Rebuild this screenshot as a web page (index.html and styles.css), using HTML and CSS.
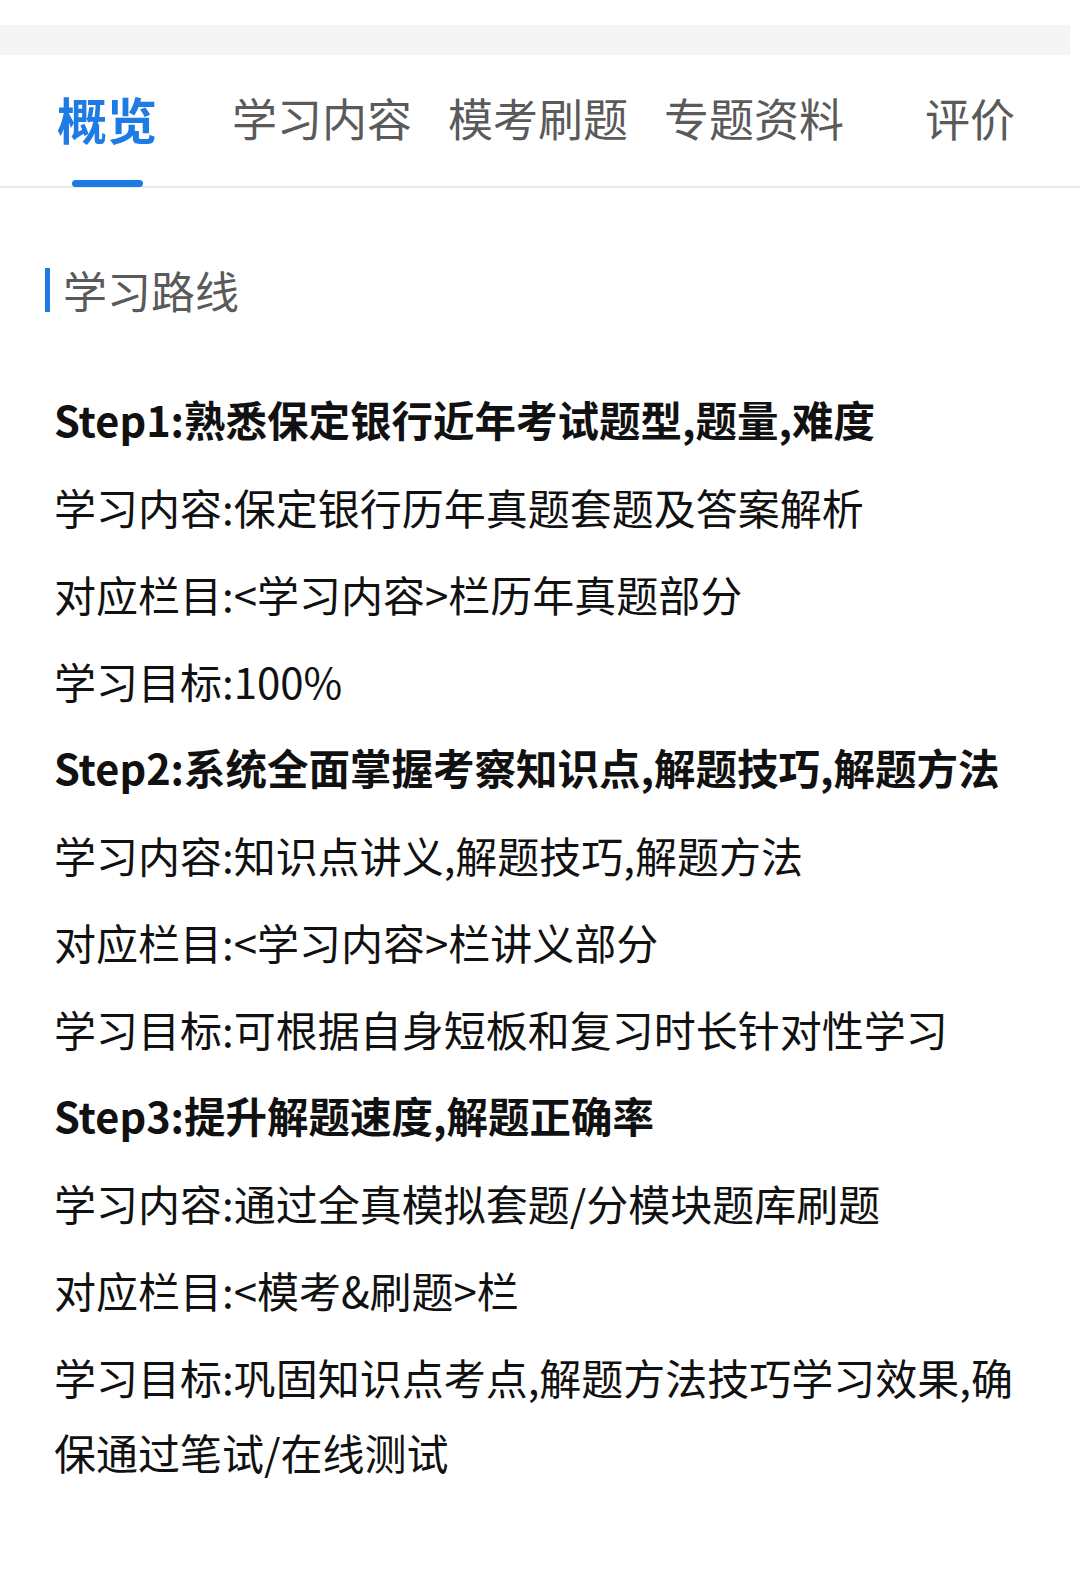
FILE: index.html
```html
<!DOCTYPE html>
<html lang="zh-CN">
<head>
    <meta charset="UTF-8">
    <meta name="viewport" content="width=device-width, initial-scale=1.0">
    <title>概览 - 学习路线</title>
    <link rel="stylesheet" href="styles.css">
</head>
<body>
    <div class="top-space"></div>
    <div class="gray-band"></div>

    <nav class="tabs">
        <div class="tab active">概览<span class="indicator"></span></div>
        <div class="tab">学习内容</div>
        <div class="tab">模考刷题</div>
        <div class="tab">专题资料</div>
        <div class="tab">评价</div>
    </nav>

    <div class="section-title">
        <span class="bar"></span>
        <span class="title-text">学习路线</span>
    </div>

    <div class="route">
        <p class="step">Step1:熟悉保定银行近年考试题型,题量,难度</p>
        <p>学习内容:保定银行历年真题套题及答案解析</p>
        <p>对应栏目:&lt;学习内容&gt;栏历年真题部分</p>
        <p>学习目标:100%</p>

        <p class="step">Step2:系统全面掌握考察知识点,解题技巧,解题方法</p>
        <p>学习内容:知识点讲义,解题技巧,解题方法</p>
        <p>对应栏目:&lt;学习内容&gt;栏讲义部分</p>
        <p>学习目标:可根据自身短板和复习时长针对性学习</p>

        <p class="step">Step3:提升解题速度,解题正确率</p>
        <p>学习内容:通过全真模拟套题/分模块题库刷题</p>
        <p>对应栏目:&lt;模考&amp;刷题&gt;栏</p>
        <p>学习目标:巩固知识点考点,解题方法技巧学习效果,确保通过笔试/在线测试</p>
    </div>
</body>
</html>
```

FILE: styles.css
```css
:root {
    --blue: #1f7be4;
    --gray-text: #5a5a5a;
    --text: #111111;
    --band: #f5f5f5;
    --line: #e9e9e9;
}

body {
    margin: 0;
    background: #ffffff;
    font-family: "Noto Sans CJK SC", "Noto Sans", sans-serif;
    color: var(--text);
}

.top-space {
    height: 25px;
}

.gray-band {
    height: 30px;
    width: 1070px;
    background: var(--band);
}

.tabs {
    display: flex;
    height: 131px;
    border-bottom: 2px solid var(--line);
}

.tab {
    position: relative;
    width: 216px;
    flex-shrink: 0;
    display: flex;
    align-items: center;
    justify-content: center;
    padding-bottom: 6px;
    box-sizing: border-box;
    font-size: 45px;
    color: var(--gray-text);
}

.tab.active {
    width: 214px;
    font-size: 50px;
    font-weight: bold;
    color: var(--blue);
}

.indicator {
    position: absolute;
    left: 72px;
    bottom: -1px;
    width: 71px;
    height: 7px;
    border-radius: 4px;
    background: var(--blue);
}

.section-title {
    display: flex;
    align-items: center;
    height: 44px;
    margin: 80px 0 0 45px;
}

.bar {
    width: 5px;
    height: 44px;
    background: var(--blue);
}

.title-text {
    margin-left: 13px;
    font-size: 44px;
    color: var(--gray-text);
}

.route {
    margin-top: 70px;
    padding: 0 54px;
}

.route p {
    margin: 0 0 12px;
    font-size: 42px;
    line-height: 75px;
}

.route .step {
    font-size: 41.5px;
    font-weight: bold;
}
```
